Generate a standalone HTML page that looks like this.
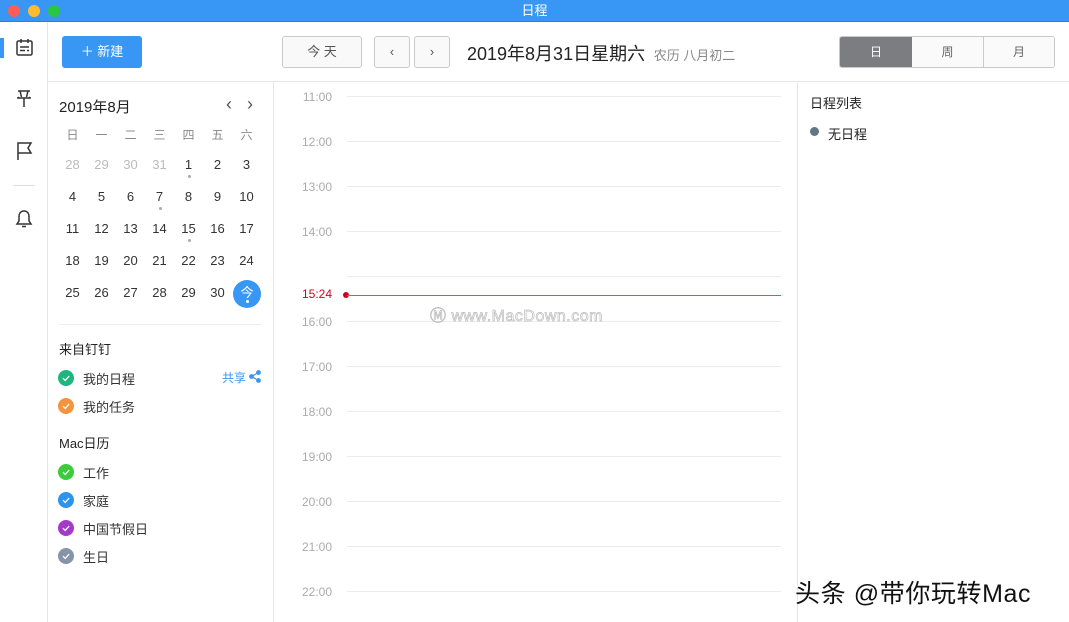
<!DOCTYPE html>
<html><head><meta charset="utf-8"><style>
*{margin:0;padding:0;box-sizing:border-box}
body{width:1069px;height:622px;overflow:hidden;background:#fff;font-family:"Liberation Sans","Noto Sans CJK SC",sans-serif;position:relative;color:#222}
.a{position:absolute}
.tb{left:0;top:0;width:1069px;height:22px;background:#3897f4;border-bottom:1px solid #2a7fd6}
.dot{top:5px;width:12px;height:12px;border-radius:50%}
.btn{border:1px solid #c9c9c9;border-radius:3px;background:#f9f9f9;text-align:center;font-size:13px;color:#555}
.d{width:29px;text-align:center;font-size:13px;color:#333}
.g{color:#bbb}
.w{color:#888}
.sd{width:3px;height:3px;border-radius:50%;background:#aaa}
.ck{width:16px;height:16px;border-radius:50%}
.ck svg{display:block}
.lb{font-size:13px;color:#333}
.hr{left:347px;width:434px;height:1px;background:#ececec}
.hl{left:280px;width:52px;text-align:right;font-size:12px;color:#aaa}
</style></head><body>
<div class="a tb"></div>
<div class="a dot" style="left:8px;background:#fc5e57"></div>
<div class="a dot" style="left:28px;background:#fdbc2e"></div>
<div class="a dot" style="left:48px;background:#27c840"></div>
<div class="a" style="left:0;width:1069px;top:0;height:22px;line-height:22px;text-align:center;color:#fff;font-size:13px">日程</div>

<!-- sidebar -->
<div class="a" style="left:47px;top:22px;width:1px;height:600px;background:#e6e6e6"></div>
<div class="a" style="left:0;top:38px;width:4px;height:20px;background:#3897f4"></div>
<svg class="a" style="left:15px;top:38px" width="19" height="20" viewBox="0 0 19 20" fill="none" stroke="#333" stroke-width="1.5"><rect x="2" y="3" width="15" height="14" rx="1.5"/><line x1="6" y1="1" x2="6" y2="5"/><line x1="13" y1="1" x2="13" y2="5"/><line x1="5" y1="9" x2="14" y2="9"/><line x1="5" y1="12.5" x2="10" y2="12.5"/><line x1="12" y1="12.5" x2="14" y2="12.5"/></svg>
<svg class="a" style="left:15px;top:89px" width="18" height="20" viewBox="0 0 18 20" fill="none" stroke="#333" stroke-width="1.5"><path d="M3 2h12M5 2l1.5 6M13 2l-1.5 6M2 9h14M9 9v9M4 8l-1 1M14 8l1 1"/></svg>
<svg class="a" style="left:16px;top:141px" width="18" height="20" viewBox="0 0 18 20" fill="none" stroke="#333" stroke-width="1.5"><path d="M2 19V2h13l-3 5 3 5H2"/></svg>
<div class="a" style="left:13px;top:185px;width:22px;height:1px;background:#ddd"></div>
<svg class="a" style="left:15px;top:209px" width="18" height="20" viewBox="0 0 18 20" fill="none" stroke="#333" stroke-width="1.5"><path d="M9 2c-3.5 0-5 2.5-5 5.5v4.5L2 15h14l-2-3V7.5C14 4.5 12.5 2 9 2zM7 17.5h4"/></svg>

<!-- header -->
<div class="a" style="left:62px;top:36px;width:80px;height:32px;background:#3897f4;border-radius:3px;color:#fff;font-size:13px;text-align:center;line-height:32px">＋ 新建</div>
<div class="a" style="left:48px;top:81px;width:1021px;height:1px;background:#e6e6e6"></div>
<div class="a btn" style="left:282px;top:36px;width:80px;height:32px;line-height:30px">今 天</div>
<div class="a btn" style="left:374px;top:36px;width:36px;height:32px;line-height:30px">&lsaquo;</div>
<div class="a btn" style="left:414px;top:36px;width:36px;height:32px;line-height:30px">&rsaquo;</div>
<div class="a" style="left:467px;top:40px;font-size:18px;color:#222">2019年8月31日星期六 <span style="font-size:13px;color:#888">&nbsp;农历 八月初二</span></div>
<div class="a" style="left:839px;top:36px;width:216px;height:32px;border:1px solid #c9c9c9;border-radius:3px;overflow:hidden;display:flex;font-size:12px;color:#666;line-height:30px;text-align:center">
<div style="width:72px;background:#7b7d80;color:#fff">日</div><div style="width:72px;border-right:1px solid #ccc;background:#fafafa">周</div><div style="flex:1;background:#fafafa">月</div></div>

<!-- mini calendar -->
<div class="a" style="left:273px;top:82px;width:1px;height:540px;background:#e6e6e6"></div>
<div class="a" style="left:59px;top:96px;font-size:15px;color:#222">2019年8月</div>
<div class="a" style="left:226px;top:94px;font-size:18px;color:#555">&lsaquo;&nbsp;&nbsp;&nbsp;&rsaquo;</div>
<div id="cal"></div>
<div class="a" style="left:233px;top:280px;width:28px;height:28px;border-radius:50%;background:#3897f4;color:#fff;text-align:center;line-height:26px;font-size:13px">今</div>
<div class="a" style="left:246px;top:300px;width:3px;height:3px;border-radius:50%;background:#fff"></div>
<div class="a sd" style="left:188px;top:175px"></div>
<div class="a sd" style="left:159px;top:207px"></div>
<div class="a sd" style="left:188px;top:239px"></div>
<div class="a" style="left:59px;top:324px;width:203px;height:1px;background:#eee"></div>

<div class="a" style="left:59px;top:339px;font-size:13px;color:#222">来自钉钉</div>
<div id="cks"></div>
<div class="a lb" style="left:83px;top:369px">我的日程</div>
<div class="a" style="left:222px;top:369px;font-size:12px;color:#3897f4">共享</div>
<svg class="a" style="left:249px;top:370px" width="12" height="13" viewBox="0 0 12 13" fill="#3897f4" stroke="#3897f4" stroke-width="1.2"><circle cx="9.5" cy="2.5" r="1.8"/><circle cx="2.5" cy="6.5" r="1.8"/><circle cx="9.5" cy="10.5" r="1.8"/><path d="M9.5 2.5L2.5 6.5 9.5 10.5" fill="none"/></svg>
<div class="a lb" style="left:83px;top:397px">我的任务</div>
<div class="a" style="left:59px;top:433px;font-size:13px;color:#222">Mac日历</div>
<div class="a lb" style="left:83px;top:463px">工作</div>
<div class="a lb" style="left:83px;top:491px">家庭</div>
<div class="a lb" style="left:83px;top:519px">中国节假日</div>
<div class="a lb" style="left:83px;top:547px">生日</div>

<!-- day grid -->
<div id="grid"></div>
<div class="a hr" style="top:276px"></div>
<div class="a" style="left:280px;top:287px;width:52px;text-align:right;font-size:12px;color:#d0021b">15:24</div>
<div class="a" style="left:343px;top:292px;width:6px;height:6px;border-radius:50%;background:#d0021b"></div>
<div class="a" style="left:347px;top:295px;width:434px;height:1px;background:#f04848"></div>
<div class="a" style="left:430px;top:302px;font-size:16px;color:#fff;-webkit-text-stroke:0.7px #bbb;letter-spacing:0.5px">Ⓜ www.MacDown.com</div>

<!-- right panel -->
<div class="a" style="left:797px;top:82px;width:1px;height:540px;background:#e6e6e6"></div>
<div class="a" style="left:810px;top:93px;font-size:13px;color:#222">日程列表</div>
<div class="a" style="left:810px;top:127px;width:9px;height:9px;border-radius:50%;background:#627785"></div>
<div class="a" style="left:828px;top:124px;font-size:13px;color:#222">无日程</div>
<div class="a" style="left:795px;top:574px;font-size:25px;letter-spacing:0.6px;color:#111;text-shadow:1px 1px 0 #fff,-1px -1px 0 #fff">头条 @带你玩转Mac</div>

<script>
var cal=document.getElementById('cal'),h='';
var xs=[58,87,116,145,174,203,232];
var wk=['日','一','二','三','四','五','六'];
wk.forEach(function(t,i){h+='<div class="a d w" style="left:'+xs[i]+'px;top:126px;font-size:12px">'+t+'</div>'});
var days=[[28,29,30,31,1,2,3],[4,5,6,7,8,9,10],[11,12,13,14,15,16,17],[18,19,20,21,22,23,24],[25,26,27,28,29,30,0]];
days.forEach(function(r,ri){r.forEach(function(d,ci){if(!d)return;var g=(ri==0&&ci<4)?' g':'';h+='<div class="a d'+g+'" style="left:'+xs[ci]+'px;top:'+(157+ri*32)+'px">'+d+'</div>'})});
cal.innerHTML=h;
var ck=[[369,'#1fb57f'],[397,'#f5943f'],[463,'#3ccb3a'],[491,'#2c94ec'],[519,'#a33bc9'],[547,'#8694a8']],c='';
ck.forEach(function(k){c+='<div class="a ck" style="left:58px;top:'+(k[0]+1)+'px;background:'+k[1]+'"><svg width="16" height="16" viewBox="0 0 16 16"><path d="M5 8.2l2.2 2.2L11.2 6" fill="none" stroke="#fff" stroke-width="1.3"/></svg></div>'});
document.getElementById('cks').innerHTML=c;
var gr='';
for(var i=11;i<=22;i++){if(i==15)continue;var y=96+(i-11)*45;gr+='<div class="a hr" style="top:'+y+'px"></div><div class="a hl" style="top:'+(y-6)+'px">'+i+':00</div>'}
document.getElementById('grid').innerHTML=gr;
</script>
</body></html>
